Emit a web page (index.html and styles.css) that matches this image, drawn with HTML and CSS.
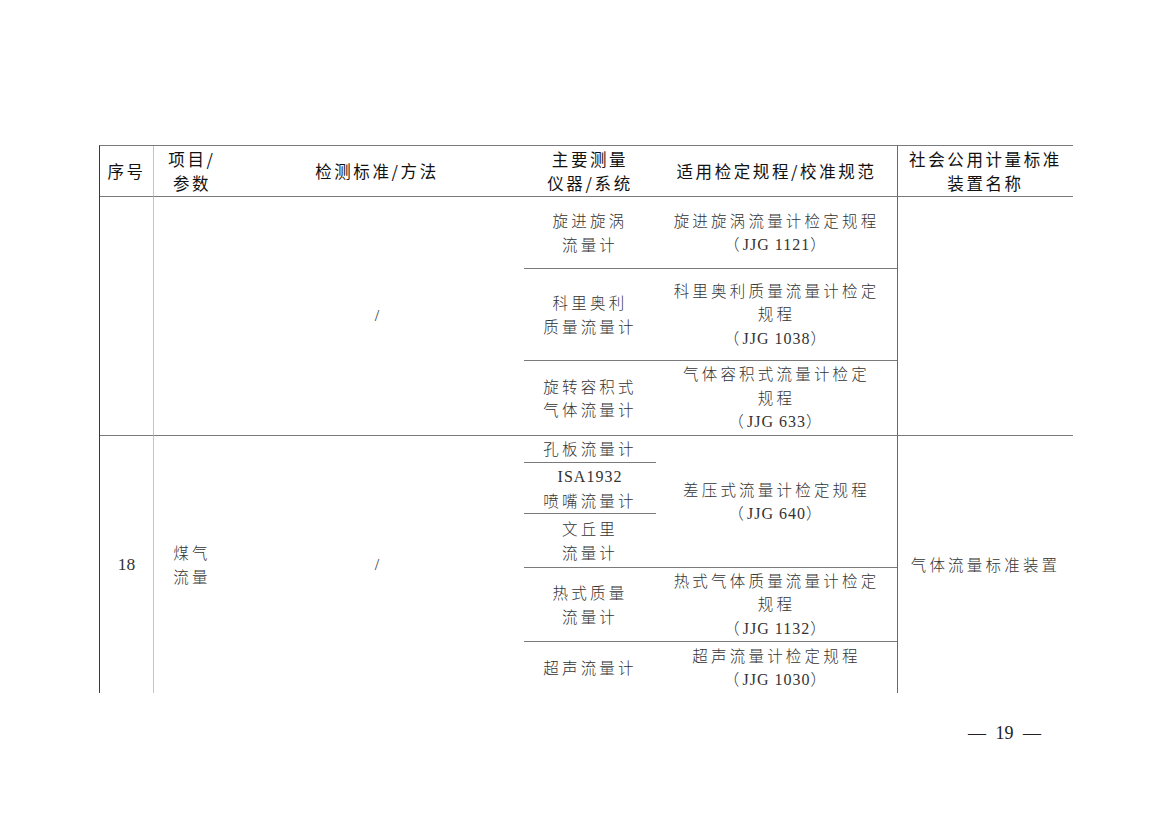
FILE: index.html
```html
<!DOCTYPE html>
<html lang="zh-CN">
<head>
<meta charset="utf-8">
<title>检测标准</title>
<link rel="stylesheet" href="styles.css">
</head>
<body>
<div class="page">
  <div class="table">
    <div class="c h col1 rh"><div class="t">序号</div></div>
    <div class="c h col2 rh"><div class="t">项目/<br>参数</div></div>
    <div class="c h col3 rh"><div class="t">检测标准/方法</div></div>
    <div class="c h col4 rh"><div class="t">主要测量<br>仪器/系统</div></div>
    <div class="c h col5 rh"><div class="t">适用检定规程/校准规范</div></div>
    <div class="c h col6 rh"><div class="t">社会公用计量标准<br>装置名称</div></div>

    <div class="c col1 g1"></div>
    <div class="c col2 g1"></div>
    <div class="c col3 g1"><div class="t slash">/</div></div>
    <div class="c col4 r2"><div class="t">旋进旋涡<br>流量计</div></div>
    <div class="c col5 r2"><div class="t">旋进旋涡流量计检定规程<br>（<span class="lat">JJG 1121</span>）</div></div>
    <div class="c col4 r3 bt"><div class="t">科里奥利<br>质量流量计</div></div>
    <div class="c col5 r3 bt"><div class="t">科里奥利质量流量计检定<br>规程<br>（<span class="lat">JJG 1038</span>）</div></div>
    <div class="c col4 r4 bt"><div class="t">旋转容积式<br>气体流量计</div></div>
    <div class="c col5 r4 bt"><div class="t">气体容积式流量计检定<br>规程<br>（<span class="lat">JJG 633</span>）</div></div>
    <div class="c col6 g1"></div>

    <div class="c col1 g2 bt"><div class="t num">18</div></div>
    <div class="c col2 g2 bt"><div class="t">煤气<br>流量</div></div>
    <div class="c col3 g2 bt"><div class="t slash">/</div></div>
    <div class="c col4 r5 bt"><div class="t">孔板流量计</div></div>
    <div class="c col4 r6 bt"><div class="t"><span class="lat">ISA1932</span><br>喷嘴流量计</div></div>
    <div class="c col4 r7 bt"><div class="t">文丘里<br>流量计</div></div>
    <div class="c col5 r5to7 bt"><div class="t">差压式流量计检定规程<br>（<span class="lat">JJG 640</span>）</div></div>
    <div class="c col4 r8 bt"><div class="t">热式质量<br>流量计</div></div>
    <div class="c col5 r8 bt"><div class="t">热式气体质量流量计检定<br>规程<br>（<span class="lat">JJG 1132</span>）</div></div>
    <div class="c col4 r9 bt"><div class="t">超声流量计</div></div>
    <div class="c col5 r9 bt"><div class="t">超声流量计检定规程<br>（<span class="lat">JJG 1030</span>）</div></div>
    <div class="c col6 g2 bt"><div class="t">气体流量标准装置</div></div>
  </div>
  <div class="footer">
    <span class="pageno">— 19 —</span>
  </div>
</div>
</body>
</html>
```
FILE: styles.css
```css
html, body {
  margin: 0;
  padding: 0;
  background: #ffffff;
}

.page {
  padding: 145px 0 0 99px;
  width: 974px;
}

.table {
  display: grid;
  grid-template-columns: 54px 76px 294px 132px 241px 176px;
  grid-template-rows: 51px 71px 92px 75px 27px 51px 54px 74px 52px;
  border-top: 1px solid #7a7a7a;
  border-left: 1px solid #3a3a3a;
  width: 973px;
  font-family: "Noto Sans CJK SC", "Noto Sans", sans-serif;
  font-weight: 300;
  color: #333333;
  font-size: 15.5px;
  line-height: 23.5px;
  letter-spacing: 3.2px;
}

.c {
  box-sizing: border-box;
  display: flex;
  align-items: center;
  justify-content: center;
  overflow: visible;
}

.t {
  text-align: center;
  white-space: nowrap;
}

.h {
  font-size: 16.5px;
  font-weight: 400;
  line-height: 24px;
  letter-spacing: 2.6px;
  color: #111111;
  border-bottom: 1px solid #7a7a7a;
}

.bt {
  border-top: 1px solid #7a7a7a;
}

.col1 { grid-column: 1; border-right: 1px solid #c4c4c4; }
.col2 { grid-column: 2; }
.col3 { grid-column: 3; }
.col4 { grid-column: 4; }
.col5 { grid-column: 5; }
.col6 { grid-column: 6; border-left: 1px solid #6a6a6a; }

.rh { grid-row: 1; }
.g1 { grid-row: 2 / 5; }
.g2 { grid-row: 5 / 10; }
.r2 { grid-row: 2; }
.r3 { grid-row: 3; }
.r4 { grid-row: 4; }
.r5 { grid-row: 5; }
.r6 { grid-row: 6; }
.r7 { grid-row: 7; }
.r5to7 { grid-row: 5 / 8; }
.r8 { grid-row: 8; }
.r9 { grid-row: 9; }

.lat, .num, .slash {
  font-family: "Liberation Serif", "Times New Roman", serif;
  font-weight: normal;
  color: #333333;
  font-size: 16px;
  letter-spacing: 1px;
}

.num {
  font-size: 17.5px;
  letter-spacing: 0;
}

.slash {
  letter-spacing: 0;
}

.footer {
  display: flex;
  justify-content: flex-end;
  width: 973px;
  margin-top: 28px;
}

.pageno {
  font-family: "Liberation Serif", "Times New Roman", serif;
  font-size: 18px;
  line-height: 24px;
  color: #222222;
  word-spacing: 5px;
  padding-right: 31px;
}
```
